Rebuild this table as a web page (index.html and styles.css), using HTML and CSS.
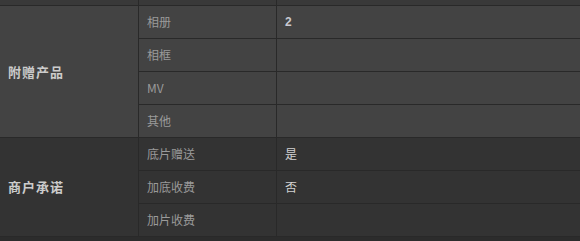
FILE: index.html
```html
<!DOCTYPE html>
<html lang="zh-CN">
<head>
    <meta charset="UTF-8">
    <meta name="viewport" content="width=device-width, initial-scale=1.0">
    <title>套餐详情</title>
    <link rel="stylesheet" href="styles.css">
</head>
<body>
    <div class="spec">
        <!-- tail of the row above -->
        <div class="group group-light tail">
            <div class="cell"></div>
            <div class="cell"></div>
            <div class="cell value"></div>
        </div>

        <div class="group group-light">
            <div class="cell label rows-4">附赠产品</div>
            <div class="cell name">相册</div>
            <div class="cell value num">2</div>
            <div class="cell name">相框</div>
            <div class="cell value"></div>
            <div class="cell name">MV</div>
            <div class="cell value"></div>
            <div class="cell name">其他</div>
            <div class="cell value"></div>
        </div>

        <div class="group group-dark">
            <div class="cell label rows-3">商户承诺</div>
            <div class="cell name">底片赠送</div>
            <div class="cell value">是</div>
            <div class="cell name">加底收费</div>
            <div class="cell value">否</div>
            <div class="cell name">加片收费</div>
            <div class="cell value"></div>
        </div>
    </div>
</body>
</html>
```

FILE: styles.css
```css
* {
    box-sizing: border-box;
    margin: 0;
    padding: 0;
}

body {
    background-color: #2c2c2c;
    font-family: "Noto Sans CJK SC", "Liberation Sans", sans-serif;
    font-size: 12px;
}

.spec {
    width: 580px;
}

.group {
    display: grid;
    grid-template-columns: 139px 138px 1fr;
    grid-auto-rows: 33px;
}

.group-light {
    background-color: #434343;
}

.group-dark {
    background-color: #333333;
}

.tail {
    grid-auto-rows: 6px;
    background-color: #393939;
}

.cell {
    display: flex;
    align-items: center;
    padding: 0 8px 1px;
    border-right: 1px solid #292929;
    border-bottom: 1px solid #292929;
}

.label {
    font-size: 13px;
    font-weight: bold;
    color: #cccccc;
    letter-spacing: 1px;
}

.rows-4 {
    grid-row: span 4;
}

.rows-3 {
    grid-row: span 3;
}

.name {
    color: #9a9a9a;
}

.value {
    color: #d2d2d2;
    border-right: none;
}

.num {
    font-family: "Liberation Sans", sans-serif;
    font-weight: bold;
    color: #c8c8d0;
}
```
